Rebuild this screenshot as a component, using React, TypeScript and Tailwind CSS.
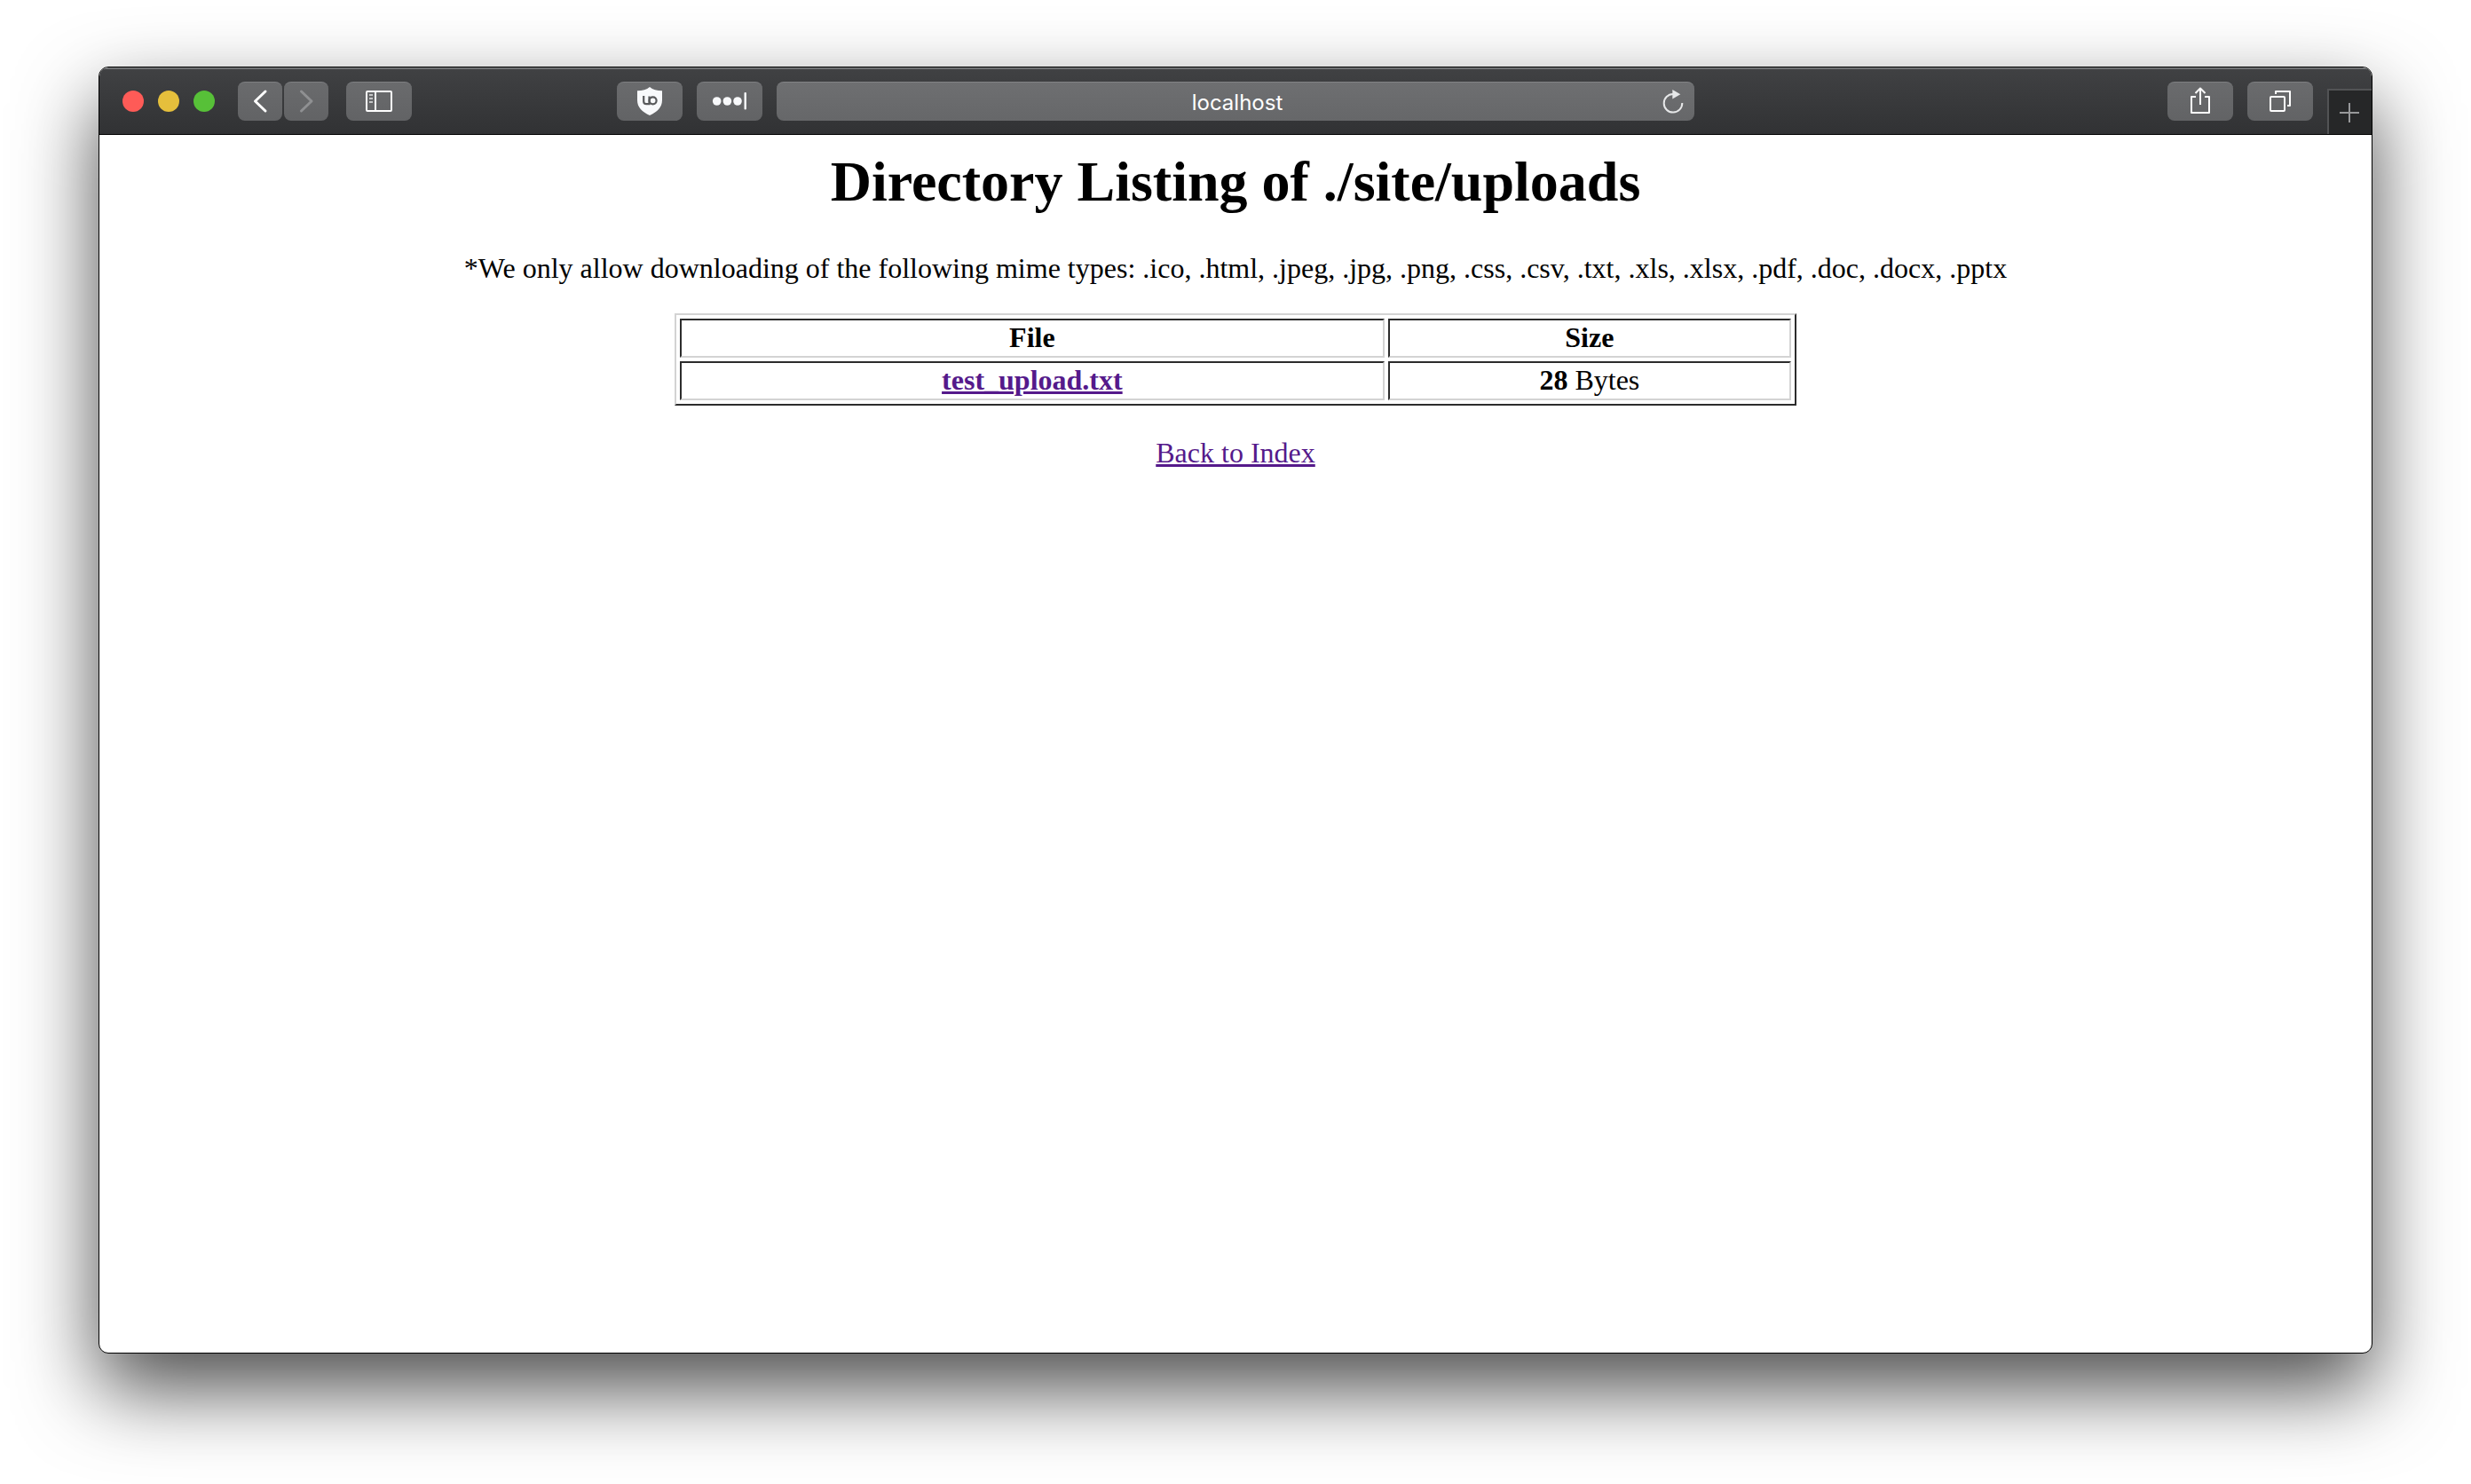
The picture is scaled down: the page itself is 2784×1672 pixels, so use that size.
import type { ReactNode } from "react";

const button =
  "flex h-11 shrink-0 items-center justify-center rounded-lg border-t border-[#7e7f81] bg-linear-to-b from-[#6a6b6d] to-[#626365] text-white";

function ToolbarButton({ label, narrow, children }: { label: string; narrow?: boolean; children: ReactNode }) {
  return (
    <button type="button" aria-label={label} className={narrow ? `${button} w-[50px]` : `${button} w-[74px]`}>
      <svg
        viewBox={narrow ? "0 0 50 44" : "0 0 74 44"}
        className={narrow ? "-mt-px h-11 w-[50px]" : "-mt-px h-11 w-[74px]"}
        fill="none"
        stroke="currentColor"
        strokeWidth="2"
      >
        {children}
      </svg>
    </button>
  );
}

function Toolbar() {
  return (
    <header className="grid h-[76px] grid-cols-[763fr_1034fr_763fr] border-t-2 border-b border-t-[#707274] border-b-black bg-linear-to-b from-[#404143] to-[#313234]">
      <div className="flex justify-between pt-3.5 pr-4 pl-6.5">
        <div className="flex gap-5">
          <div className="flex h-11 items-center gap-4 pr-1.5">
            <button type="button" aria-label="Close" className="size-6 rounded-full bg-[#fe5b57]" />
            <button type="button" aria-label="Minimise" className="size-6 rounded-full bg-[#e5bf3c]" />
            <button type="button" aria-label="Zoom" className="size-6 rounded-full bg-[#57c038]" />
          </div>
          <div className="flex gap-0.5">
            <ToolbarButton label="Back" narrow>
              <path d="M31 11 19.500 22 31 33" strokeWidth="3" strokeLinecap="round" strokeLinejoin="round" />
            </ToolbarButton>
            <ToolbarButton label="Forward" narrow>
              <path d="M19.500 11 31 22 19.500 33" stroke="#8f9092" strokeWidth="3" strokeLinecap="round" strokeLinejoin="round" />
            </ToolbarButton>
          </div>
          <ToolbarButton label="Show sidebar">
            <rect x="23" y="11" width="28" height="22" rx="1" />
            <path d="M33 11v22" />
            <path d="M26 15h4M26 19h4M26 23h4" stroke="#c4c5c6" />
          </ToolbarButton>
        </div>
        <div className="flex gap-4">
          <ToolbarButton label="uBlock Origin">
            <path
              d="M37 6c3.500 3 8 4 14 4.200V21c0 8-5.500 13-14 17-8.500-4-14-9-14-17V10.200C29 10 33.500 9 37 6Z"
              fill="#f8f9fb"
              stroke="none"
            />
            <path d="M30.200 16v6.200a3 3 0 0 0 3 3h3.300V16.500" stroke="#58595b" strokeWidth="2.200" />
            <circle cx="40.600" cy="21.300" r="4" stroke="#58595b" strokeWidth="2.200" />
          </ToolbarButton>
          <ToolbarButton label="Password manager">
            <g fill="#f8f9fb" stroke="none">
              <circle cx="22.700" cy="22" r="4.800" />
              <circle cx="34.400" cy="22" r="4.800" />
              <circle cx="46" cy="22" r="4.800" />
              <rect x="53.500" y="12" width="2.400" height="19.500" rx="1" />
            </g>
          </ToolbarButton>
        </div>
      </div>

      <div className="flex pt-3.5">
        <div className="grid h-11 w-full rounded-lg border-t border-[#828385] bg-linear-to-b from-[#6e6f71] to-[#666769]">
          <input
            type="text"
            aria-label="Address"
            defaultValue="localhost"
            className="col-start-1 row-start-1 w-full bg-transparent pt-0.5 pl-1 text-center font-[Inter,sans-serif] text-[24px] leading-[42px] text-white outline-none"
          />
          <button type="button" aria-label="Reload" className="col-start-1 row-start-1 mr-2.5 h-11 w-7 justify-self-end text-[#e6e7e8]">
            <svg viewBox="0 0 28 44" className="-mt-px h-11 w-7" fill="none" stroke="currentColor" strokeWidth="2">
              <path d="M24.300 23a10.300 10.300 0 1 1-10.300-10" />
              <path d="M13.300 8v10.600L22.300 13.300Z" fill="currentColor" stroke="none" />
            </svg>
          </button>
        </div>
      </div>

      <div className="flex items-start justify-end gap-4">
        <div className="flex gap-4 pt-3.5">
          <ToolbarButton label="Share">
            <path d="M32 17h-5v18h20V17h-5" strokeLinejoin="round" />
            <path d="M37 26V8M31.500 13 37 7.500 42.500 13" strokeLinejoin="round" />
          </ToolbarButton>
          <ToolbarButton label="Show all tabs">
            <rect x="26" y="17" width="16" height="16" rx="1" />
            <path d="M32 14v-3h16v16h-3" strokeLinejoin="round" />
          </ToolbarButton>
        </div>
        <button
          type="button"
          aria-label="New tab"
          className="mt-[22px] flex h-[51px] w-[50px] border-t-2 border-l-2 border-[#525355] bg-[#262728] text-[#97989a]"
        >
          <svg viewBox="0 0 48 48" className="size-12" fill="none" stroke="currentColor" strokeWidth="2">
            <path d="M23 14v22M12 25h22" />
          </svg>
        </button>
      </div>
    </header>
  );
}

const cell = "border-2 border-t-[#2c2c2c] border-r-[#d3d3d3] border-b-[#d3d3d3] border-l-[#2c2c2c] px-0.5 pt-px pb-[3px]";

export default function App() {
  return (
    <div className="flex min-h-screen flex-col bg-white px-[111px] pt-[75px] pb-[147px]">
      <div className="flex flex-1 flex-col overflow-hidden rounded-[11px] border border-black bg-white shadow-[0_40px_90px_rgba(0,0,0,0.7)]">
        <Toolbar />
        <main className="flex flex-col items-center p-4 text-center font-['Liberation_Serif',serif] text-[32px] leading-[36px] text-black">
          <h1 className="text-[64px] leading-[74px] font-bold">Directory Listing of ./site/uploads</h1>
          <p className="mt-[42px]">
            *We only allow downloading of the following mime types: .ico, .html, .jpeg, .jpg, .png, .css, .csv, .txt, .xls,
            .xlsx, .pdf, .doc, .docx, .pptx
          </p>
          <table className="mt-[33px] w-1/2 border-separate border-spacing-1 border-2 border-t-[#d3d3d3] border-r-[#2c2c2c] border-b-[#2c2c2c] border-l-[#d3d3d3]">
            <colgroup>
              <col className="w-[63.6%]" />
              <col />
            </colgroup>
            <thead>
              <tr>
                <th className={cell}>File</th>
                <th className={cell}>Size</th>
              </tr>
            </thead>
            <tbody>
              <tr>
                <td className={cell}>
                  <a href="#test_upload.txt" className="font-bold text-[#551a8b] underline">
                    test_upload.txt
                  </a>
                </td>
                <td className={cell}>
                  <b>28</b> Bytes
                </td>
              </tr>
            </tbody>
          </table>
          <a href="#index" className="mt-[35px] text-[#551a8b] underline">
            Back to Index
          </a>
        </main>
      </div>
    </div>
  );
}
